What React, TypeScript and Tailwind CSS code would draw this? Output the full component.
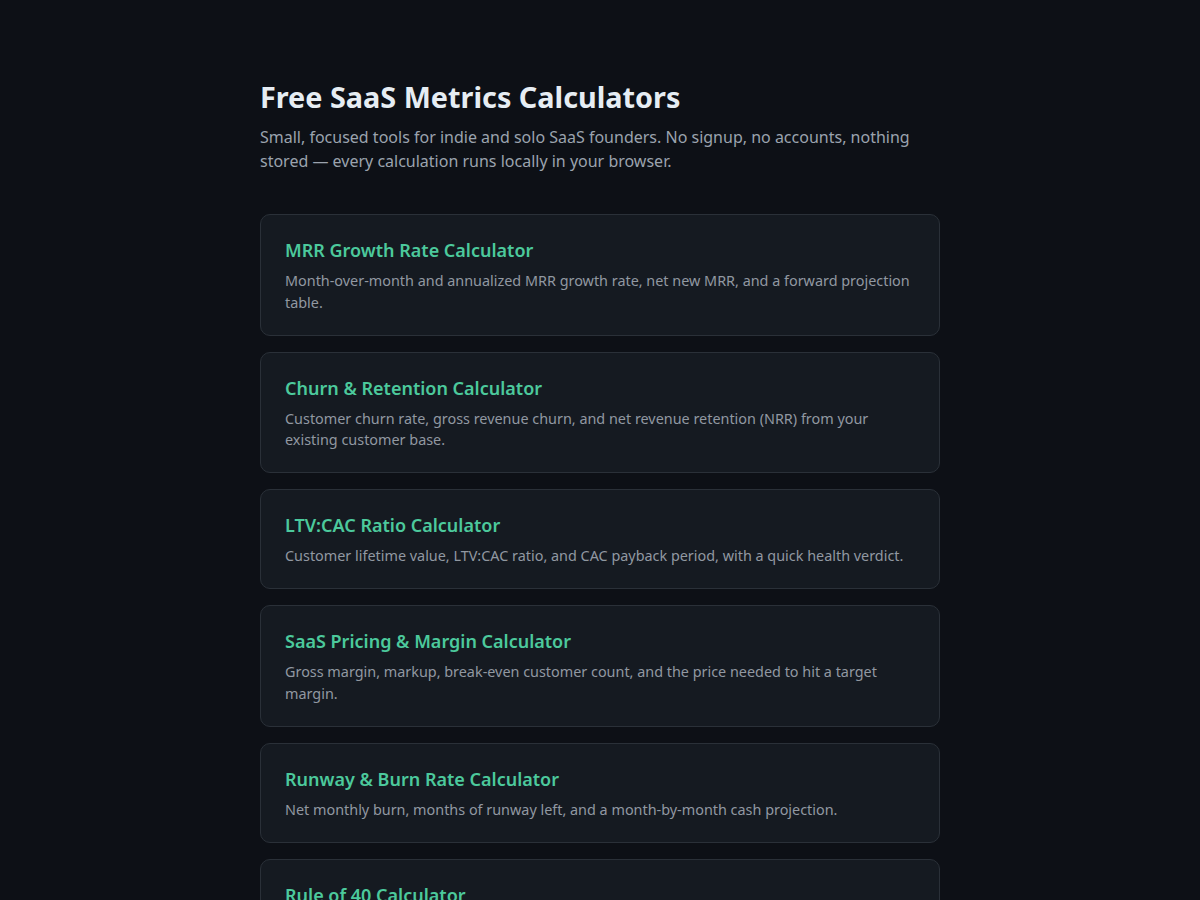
import React from 'react';

interface Tool {
  title: string;
  description: string;
}

const tools: Tool[] = [
  {
    title: "MRR Growth Rate Calculator",
    description: "Month-over-month and annualized MRR growth rate, net new MRR, and a forward projection table.",
  },
  {
    title: "Churn & Retention Calculator",
    description: "Customer churn rate, gross revenue churn, and net revenue retention (NRR) from your existing customer base.",
  },
  {
    title: "LTV:CAC Ratio Calculator",
    description: "Customer lifetime value, LTV:CAC ratio, and CAC payback period, with a quick health verdict.",
  },
  {
    title: "SaaS Pricing & Margin Calculator",
    description: "Gross margin, markup, break-even customer count, and the price needed to hit a target margin.",
  },
  {
    title: "Runway & Burn Rate Calculator",
    description: "Net monthly burn, months of runway left, and a month-by-month cash projection.",
  },
  {
    title: "Rule of 40 Calculator",
    description: "Combine revenue growth rate and profit margin to see whether your SaaS clears the Rule of 40.",
  },
];

export default function App() {
  return (
    <div className="min-h-screen bg-[#0d1016] text-[#e6edf3] font-['Noto_Sans',sans-serif]">
      <main className="max-w-[680px] mx-auto pt-[79px] pb-20">
        {/* Header */}
        <h1 className="text-[28.8px] leading-[36px] font-bold text-[#e6edf3] mb-[10px]">
          Free SaaS Metrics Calculators
        </h1>
        <p className="text-base leading-6 text-[#9ba3ae] mb-[41px]">
          Small, focused tools for indie and solo SaaS founders. No signup, no accounts, nothing stored — every calculation runs locally in your browser.
        </p>

        {/* Tool list */}
        <div className="flex flex-col gap-4">
          {tools.map((tool) => (
            <a
              key={tool.title}
              href="#"
              className="block bg-[#151a21] border border-[#2a3038] rounded-[10px] px-6 pt-[23px] pb-[21.5px] hover:border-[#3a414b] transition-colors"
            >
              <h2 className="text-lg leading-[25px] font-semibold text-[#4cc99c] mb-[7px]">
                {tool.title}
              </h2>
              <p className="text-[14.4px] leading-[21.5px] text-[#9198a1]">
                {tool.description}
              </p>
            </a>
          ))}
        </div>
      </main>
    </div>
  );
}
